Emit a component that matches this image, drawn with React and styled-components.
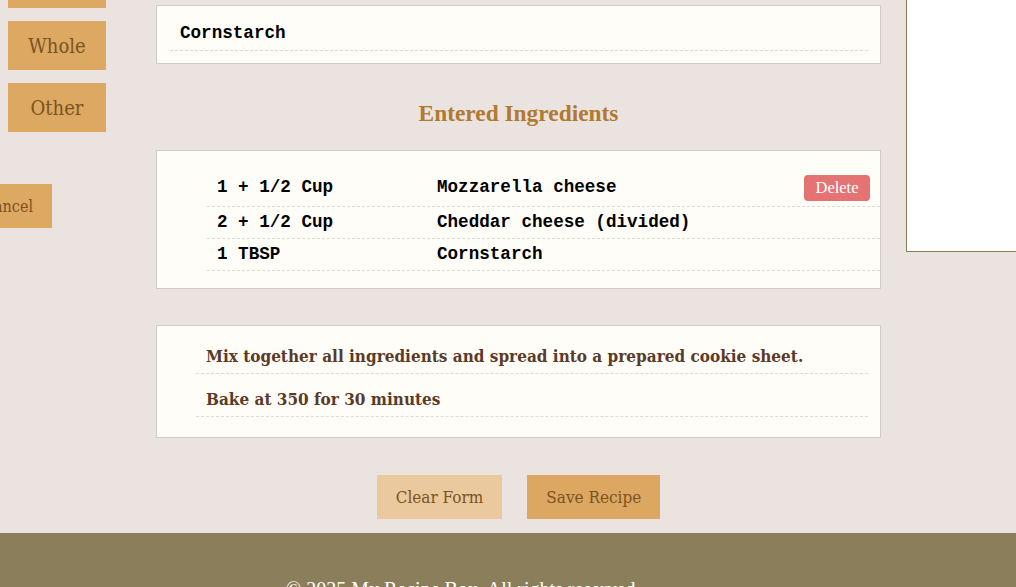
import React from "react";
import styled, { createGlobalStyle } from "styled-components";

const GlobalStyle = createGlobalStyle`
  html, body {
    margin: 0;
    padding: 0;
    background: #ebe3df;
    overflow: hidden;
  }
`;

const ingredients = [
  { amount: "1 + 1/2 Cup", name: "Mozzarella cheese", deletable: true },
  { amount: "2 + 1/2 Cup", name: "Cheddar cheese (divided)" },
  { amount: "1 TBSP", name: "Cornstarch" },
];

const steps = [
  "Mix together all ingredients and spread into a prepared cookie sheet.",
  "Bake at 350 for 30 minutes",
];

const App = () => {
  return (
    <>
      <GlobalStyle />
      <Page>
        <Sidebar>
          <TypeButton>Bread</TypeButton>
          <TypeButton>Whole</TypeButton>
          <TypeButton>Other</TypeButton>
          <CancelButton>Cancel</CancelButton>
        </Sidebar>

        <Main>
          <Card $pad="12px 12px 12px 13px">
            <List>
              <SearchItem>Cornstarch</SearchItem>
            </List>
          </Card>

          <Heading>Entered Ingredients</Heading>

          <Card $pad="18px 0 17px 50px">
            <List>
              {ingredients.map((item) => (
                <IngredientRow key={item.amount + item.name} $tall={item.deletable}>
                  <Amount>{item.amount}</Amount>
                  <Name>{item.name}</Name>
                  {item.deletable && <DeleteButton>Delete</DeleteButton>}
                </IngredientRow>
              ))}
            </List>
          </Card>

          <Card $pad="5px 12px 20px 39px" $gap="36px">
            <List>
              {steps.map((s) => (
                <Step key={s}>{s}</Step>
              ))}
            </List>
          </Card>

          <Actions>
            <ActionButton $light>Clear Form</ActionButton>
            <ActionButton>Save Recipe</ActionButton>
          </Actions>
        </Main>

        <SidePanel />
      </Page>

      <Footer>
        <FooterText>© 2025 My Recipe Box. All rights reserved.</FooterText>
      </Footer>
    </>
  );
};

export default App;

const slab = `"DejaVu Serif Condensed", "DejaVu Serif", serif`;
const mono = `"Liberation Mono", "Courier New", monospace`;
const times = `"Liberation Serif", "Times New Roman", serif`;

const Page = styled.div`
  display: grid;
  grid-template-columns: 131px 725px 1fr;
  column-gap: 25px;
  align-items: start;
`;

const Sidebar = styled.aside`
  display: flex;
  flex-direction: column;
  align-items: flex-start;
  gap: 13px;
  margin-top: -41px;
  padding-left: 8px;
`;

const TypeButton = styled.button`
  width: 98px;
  height: 49px;
  border: none;
  background: #dca862;
  color: #7b5321;
  font-family: ${slab};
  font-size: 20px;
  cursor: pointer;
`;

const CancelButton = styled.button`
  margin-top: 39px;
  margin-left: -44px;
  width: 88px;
  height: 44px;
  border: none;
  background: #dca862;
  color: #7b5321;
  font-family: ${slab};
  font-size: 16px;
  cursor: pointer;
`;

const Main = styled.main`
  display: flex;
  flex-direction: column;
  padding-top: 5px;
  padding-bottom: 14px;
`;

const Card = styled.section`
  background: #fffdf8;
  border: 1px solid #cfcbc7;
  padding: ${(p) => p.$pad};
  margin-top: ${(p) => p.$gap || "0"};
`;

const List = styled.ul`
  list-style: none;
  margin: 0;
  padding: 0;
`;

const SearchItem = styled.li`
  padding: 6px 10px 7px;
  height: 19px;
  line-height: 19px;
  font-family: ${mono};
  font-size: 17.6px;
  font-weight: bold;
  color: #000;
  border-bottom: 1px dashed #dedbd6;
`;

const Heading = styled.h2`
  margin: 32px 0 20px;
  text-align: center;
  font-family: ${times};
  font-size: 23.4px;
  font-weight: bold;
  color: #b07a30;
  line-height: 34px;
`;

const IngredientRow = styled.li`
  display: flex;
  align-items: center;
  height: ${(p) => (p.$tall ? "25px" : "19px")};
  padding: 6px 10px;
  border-bottom: 1px dashed #dedbd6;
  font-family: ${mono};
  font-size: 17.6px;
  font-weight: bold;
  color: #000;
  line-height: 19px;
`;

const Amount = styled.span`
  width: 220px;
  flex-shrink: 0;
`;

const Name = styled.span`
  flex: 1;
`;

const DeleteButton = styled.button`
  width: 66px;
  height: 26px;
  border: none;
  border-radius: 4px;
  background: #e57373;
  color: #fff;
  font-family: ${times};
  font-size: 16.5px;
  line-height: 26px;
  padding: 0;
  cursor: pointer;
`;

const Step = styled.li`
  padding: 16px 10px 8px;
  line-height: 18px;
  border-bottom: 1px dashed #dedbd6;
  font-family: ${slab};
  font-size: 17px;
  font-weight: bold;
  color: #5b3a28;
`;

const Actions = styled.div`
  display: flex;
  justify-content: center;
  gap: 25px;
  margin-top: 37px;
`;

const ActionButton = styled.button`
  height: 44px;
  padding: 0 19px;
  border: none;
  background: ${(p) => (p.$light ? "#e9c99d" : "#dba761")};
  color: #7b5321;
  font-family: ${slab};
  font-size: 17px;
  cursor: pointer;
`;

const SidePanel = styled.div`
  height: 251px;
  background: #fff;
  border-left: 1px solid #8b7d5a;
  border-bottom: 1px solid #8b7d5a;
`;

const Footer = styled.footer`
  background: #8b7e5a;
  height: 60px;
  padding: 45px 0 20px 286px;
`;

const FooterText = styled.p`
  margin: 0;
  color: #fff;
  font-family: ${times};
  font-size: 20px;
`;
